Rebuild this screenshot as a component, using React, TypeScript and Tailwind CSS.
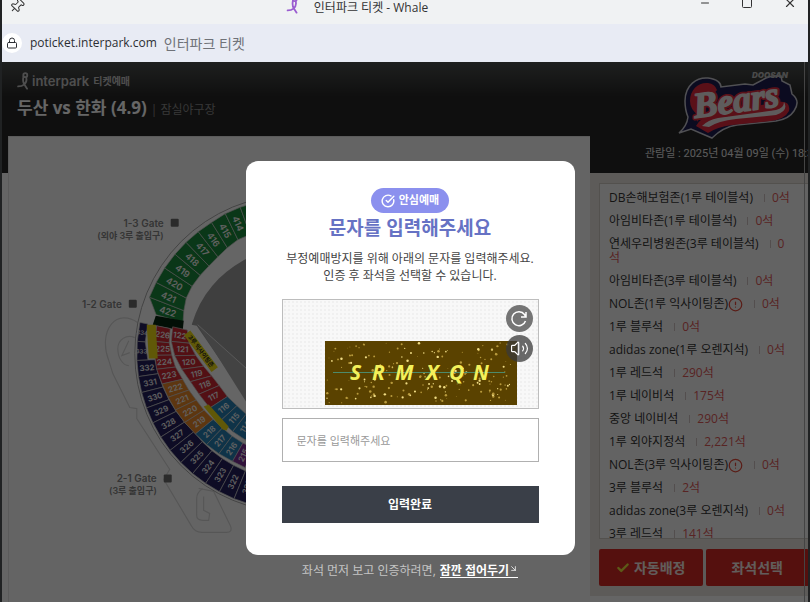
import { useState } from "react";
import { ArrowDownRight, Check, CircleAlert, CircleCheckBig, Lock, Minus, Pin, Square, Volume2, X } from "lucide-react";

type Zone = { name: string; seats: string; notice?: boolean };

const ZONES: Zone[] = [
  { name: "DB손해보험존(1루 테이블석)", seats: "0석" },
  { name: "아임비타존(1루 테이블석)", seats: "0석" },
  { name: "연세우리병원존(3루 테이블석)", seats: "0석" },
  { name: "아임비타존(3루 테이블석)", seats: "0석" },
  { name: "NOL존(1루 익사이팅존)", seats: "0석", notice: true },
  { name: "1루 블루석", seats: "0석" },
  { name: "adidas zone(1루 오렌지석)", seats: "0석" },
  { name: "1루 레드석", seats: "290석" },
  { name: "1루 네이비석", seats: "175석" },
  { name: "중앙 네이비석", seats: "290석" },
  { name: "1루 외야지정석", seats: "2,221석" },
  { name: "NOL존(3루 익사이팅존)", seats: "0석", notice: true },
  { name: "3루 블루석", seats: "2석" },
  { name: "adidas zone(3루 오렌지석)", seats: "0석" },
  { name: "3루 레드석", seats: "141석" },
];

// Centre of every stand: angles are degrees above the line going left from here
const CX = 293;
const CY = 353;

// [angle, outer radius, inner radius]
type Edge = [number, number, number];
type Block = { label: string; color: string };

const GREEN = "#1b8a3c";
const NAVY = "#25205c";
const RED = "#cf2834";
const ORANGE = "#e8872a";
const BLUE = "#2680b4";
const PURPLE = "#7b2d94";

const blocks = (color: string, ...labels: string[]): Block[] => labels.map((label) => ({ label, color }));

const OUTFIELD = blocks(GREEN, "422", "421", "420", "419", "418", "417", "416", "415", "414", "413");
const OUTFIELD_EDGES: Edge[] = [
  [15.8, 143, 115], [21.4, 155, 118], [27.4, 155, 121], [33.6, 155, 122], [40, 155, 122], [46, 155, 122],
  [52, 155, 123], [58, 155, 125], [64, 156, 127], [70, 156, 127], [76, 156, 127],
];

const UPPER_CORNER = blocks(NAVY, "334", "333");
const UPPER_CORNER_EDGES: Edge[] = [[11.5, 157, 149], [4.5, 157, 149], [-2.5, 157, 146]];

const UPPER = blocks(NAVY, "332", "331", "330", "329", "328", "327", "326", "325", "324", "323", "322", "321", "320");
const UPPER_EDGES: Edge[] = UPPER.concat(UPPER[0]).map((_, i) => [
  -2.5 - i * 5.93,
  157,
  Math.max(127, 139 - i * 2),
]);

const MIDDLE = [
  ...blocks(RED, "226", "225", "224", "223"),
  ...blocks(ORANGE, "222", "221", "220", "219"),
  ...blocks(BLUE, "218", "217", "216"),
  ...blocks(PURPLE, "215"),
];
const MIDDLE_EDGES: Edge[] = [
  [11.5, 140, 126], [5, 139, 125], [-0.7, 139, 122], [-6.5, 138, 119], [-13, 135, 114], [-19.2, 133, 111],
  [-25.5, 131, 108], [-32.3, 129, 106], [-39.3, 127, 104], [-46.3, 126, 103], [-53.3, 125, 103], [-60.5, 124, 103],
  [-67, 124, 103],
];

const LOWER = [
  ...blocks(RED, "122", "121", "120", "119", "118", "117"),
  ...blocks(BLUE, "116", "115", "114"),
  ...blocks(PURPLE, "113"),
];
const LOWER_EDGES: Edge[] = [
  [12.5, 124, 109], [5.7, 123, 105], [-1, 119, 98], [-8, 113, 91], [-15.2, 107, 85], [-23.2, 103, 81],
  [-33, 100, 79], [-42.6, 99, 77], [-52, 99, 77], [-61, 99, 77], [-70, 99, 77],
];

function point(angle: number, radius: number) {
  const rad = (angle * Math.PI) / 180;
  return [CX - radius * Math.cos(rad), CY - radius * Math.sin(rad)];
}

function Stand({ items, edges, size = 8 }: { items: Block[]; edges: Edge[]; size?: number }) {
  return (
    <g>
      {items.map((item, i) => {
        const [a, ao, ai] = edges[i];
        const [b, bo, bi] = edges[i + 1];
        const [mx, my] = point((a + b) / 2, (ao + ai + bo + bi) / 4);
        const shape = [point(a, ao), point(b, bo), point(b, bi), point(a, ai)];
        return (
          <g key={item.label}>
            <polygon points={shape.map((p) => p.join(",")).join(" ")} fill={item.color} stroke="#c8c8c8" strokeWidth="0.7" />
            <text
              x={mx}
              y={my}
              transform={`rotate(${(a + b) / 2} ${mx} ${my})`}
              textAnchor="middle"
              dominantBaseline="central"
              fontSize={size}
              fontWeight="600"
              fill="#f4f4f4"
            >
              {item.label}
            </text>
          </g>
        );
      })}
    </g>
  );
}

function Gate({ x, y, name, sub }: { x: number; y: number; name: string; sub?: string }) {
  return (
    <g fill="#858585" textAnchor="end">
      <text x={x} y={y} fontSize="10" fontWeight="600">{name}</text>
      {sub && <text x={x} y={y + 12} fontSize="9" fontWeight="600">{sub}</text>}
      <rect x={x + 7} y={y - 8} width="8" height="8" rx="1" fill="#6c6c6c" />
    </g>
  );
}

function SeatMap() {
  return (
    <svg
      viewBox="8 136 582 466"
      preserveAspectRatio="xMinYMin slice"
      className="block w-full font-['Inter','Noto_Sans_CJK_KR',sans-serif]"
      role="img"
      aria-label="잠실야구장 좌석도"
    >
      <g fill="none" stroke="#d8d8d8" strokeWidth="1.2">
        <path d="M137 322c-10-7-20-6-26 1-8 9-8 25-3 37l4 13 17 34 7 1 0 10 33 51-6 10 28 47q3 6 10 6h25q6 0 4-6l-17-35-15-3" />
        <path d="M134 337c-8-4-17 2-17 11 0 9 5 17 11 17M128 340l-7 15 8-3" />
        <path d="M202 488q-6 4-6 10v17q0 5 6 5h6l1-7-6-3v-14" />
      </g>
      <circle cx={CX} cy={CY} r="159" fill="#fdfdfd" stroke="#a9a9a9" strokeWidth="1" />
      <circle cx={CX} cy={CY} r="106" fill="#9d9d9d" />
      <path d="M180 322L196 325L246 398V452L180 400Z" fill="#fdfdfd" />
      <path d="M197 324L246 368V402Z" fill="#a8a8a8" />
      <path d="M197 324L246 368" stroke="#dcdcdc" fill="none" />
      <Stand items={OUTFIELD} edges={OUTFIELD_EDGES} size={9} />
      <path d="M155 315L183 320L182 330L152 324Z" fill="#07260f" />
      <Stand items={UPPER_CORNER} edges={UPPER_CORNER_EDGES} size={6} />
      <Stand items={UPPER} edges={UPPER_EDGES} size={8} />
      <Stand items={MIDDLE} edges={MIDDLE_EDGES} size={8} />
      <Stand items={LOWER} edges={LOWER_EDGES} size={8} />
      <path d="M146 324h9l2 34h-9z" fill="#f0dc14" />
      <path d="M203 406l5-2 20 22-2 4-4-1z" fill="#f0dc14" />
      <g transform="rotate(53 187 333)">
        <rect x="186" y="329" width="46" height="8" fill="#f0dc14" />
        <text x="209" y="335" fontSize="6" fontWeight="700" textAnchor="middle" fill="#222">3루 익사이팅존</text>
      </g>
      <Gate x={163} y={226} name="1-3 Gate" sub="(외야 3루 출입구)" />
      <Gate x={121} y={307} name="1-2 Gate" />
      <Gate x={156} y={482} name="2-1 Gate" sub="(3루 출입구)" />
    </svg>
  );
}

function Mark({ className }: { className?: string }) {
  return (
    <svg viewBox="0 0 14 20" className={className} fill="none" stroke="currentColor" strokeWidth="2" strokeLinecap="round" aria-hidden>
      <circle cx="9" cy="3.500" r="2.200" />
      <path d="M7 5c-1 4-1 6 1 9l3 4.500M10 6c1 4 0 6-2.500 8-2 1.800-3.500 2-6.500 2" />
    </svg>
  );
}

function TeamLogo() {
  const word = {
    x: 17,
    y: 46,
    transform: "rotate(-8 17 46)",
    fontFamily: "'Liberation Serif', serif",
    fontSize: 36,
    fontWeight: 700,
    fontStyle: "italic",
    strokeLinejoin: "round" as const,
  };
  return (
    <svg viewBox="0 0 118 68" className="h-[68px] w-[118px] overflow-visible" role="img" aria-label="DOOSAN Bears">
      <path
        d="M7 29C7 13 19 5 30 6c9 1 13 5 13 9l24-3 8 1 13-7 6-2h9l1 5 8 4 2 9q9 7 2 17-5 8-18 10l-39 4q-14 2-25 13L13 57l-12 4q8-7 9-16-3-7-3-16z"
        fill="#1c1c50"
        stroke="#c8c8d0"
        strokeWidth="1.500"
      />
      <path d="M12 29C12 17 21 10 30 11q7 1 9 7l-18 22-1 10q-2-3 0-7-8-6-8-14z" fill="#e02a3c" />
      <path d="M18 54q4-8 16-12l66-12q13-2 11 9-4 8-18 10l-39 4q-15 2-24 8z" fill="#e02a3c" />
      <path d="M24 54q6-6 16-8l58-8q8-2 8-8 5 9-8 13l-40 4q-18 2-27 8z" fill="#ece6e6" />
      <text {...word} fill="#e02a3c" stroke="#e02a3c" strokeWidth="5" aria-hidden>Bears</text>
      <text {...word} fill="#ece6e6" stroke="#ece6e6" strokeWidth="1.500">Bears</text>
      <text x="74" y="6" fontFamily="Inter, sans-serif" fontSize="8" fontWeight="900" fontStyle="italic" fill="#b8b8b8">
        DOOSAN
      </text>
    </svg>
  );
}

// Fixed seed, so the specks stay put between renders
function specks(count: number) {
  let seed = 7;
  const next = () => (seed = (seed * 16807) % 2147483647) / 2147483647;
  return Array.from({ length: count }, () => ({ x: next() * 188 + 2, y: next() * 60 + 2, r: next() * 0.9 + 0.4 }));
}

const SPECKS = specks(190);
const LETTERS = [..."SRMXQN"];

function Captcha() {
  return (
    <svg viewBox="0 0 192 64" className="h-16 w-48" role="img" aria-label="자동입력 방지문자">
      <rect width="192" height="64" fill="#5a4200" />
      {SPECKS.map((s, i) => (
        <circle key={i} cx={s.x} cy={s.y} r={s.r} fill={i % 3 ? "#b89a3c" : "#f0dc84"} />
      ))}
      <path d="M8 31.500H180" stroke="#4c8a6c" />
      <g fontFamily="'Open Sans', sans-serif" fontSize="21" fontWeight="700" fontStyle="italic" fill="#f3f05a">
        {LETTERS.map((letter, i) => (
          <text key={letter} x={[25, 47, 70, 101, 124, 148][i]} y="39">{letter}</text>
        ))}
      </g>
    </svg>
  );
}

function SafeBookingDialog() {
  const [value, setValue] = useState("");

  return (
    <div className="absolute inset-0 flex flex-col items-center bg-black/60 pt-[99px]">
      <form
        role="dialog"
        aria-labelledby="safe-title"
        onSubmit={(e) => e.preventDefault()}
        className="flex w-[329px] flex-col items-center rounded-xl bg-white px-[36px] pt-[27px] pb-[32px]"
      >
        <span className="flex h-[25px] items-center gap-1 rounded-full bg-[#8b90ee] px-2.5 text-[11px] font-bold text-white">
          <CircleCheckBig size={14} strokeWidth={2.5} />
          안심예매
        </span>
        <h2 id="safe-title" className="mt-px text-[19px] leading-7 font-bold text-[#6672c4]">문자를 입력해주세요</h2>
        <p className="mt-2 text-center text-[12px] leading-[17px] whitespace-nowrap text-[#444]">
          부정예매방지를 위해 아래의 문자를 입력해주세요.
          <br />
          인증 후 좌석을 선택할 수 있습니다.
        </p>
        <div className="relative mt-[15px] flex h-[110px] w-full items-end border border-[#bdbdbd] bg-[#f8f8f8] bg-[radial-gradient(#f0f0f0_1px,transparent_1px)] bg-[size:4px_4px] pb-[3px] pl-[42px]">
          <Captcha />
          <div className="absolute top-[5px] right-[5px] flex flex-col gap-[3px]">
            <button type="button" aria-label="새로고침" className="flex size-[27px] items-center justify-center rounded-full bg-[#4a4a4a]/75 text-white">
              <svg viewBox="0 0 18 18" className="size-[18px]" fill="none" stroke="currentColor" strokeWidth="1.500" aria-hidden>
                <path d="M15.500 11A7 7 0 1 1 14.500 4.500L16 7M16 2V7H11" />
              </svg>
            </button>
            <button type="button" aria-label="음성듣기" className="flex size-[27px] items-center justify-center rounded-full bg-[#3a3a3a]/75 text-white">
              <Volume2 size={19} strokeWidth={1.5} />
            </button>
          </div>
        </div>
        <input
          aria-label="문자 입력"
          placeholder="문자를 입력해주세요"
          value={value}
          onChange={(e) => setValue(e.target.value)}
          className="mt-[9px] h-[44px] w-full border border-[#b0b0b0] px-[14px] text-[11px] text-[#333] placeholder:text-[#999]"
        />
        <button type="submit" className="mt-[24px] h-[37px] w-full bg-[#3a3f48] text-[12px] font-bold text-white">
          입력완료
        </button>
      </form>
      <p className="mt-[7px] flex text-[12px] leading-[18px] text-[#c4c4c4]">
        좌석 먼저 보고 인증하려면,
        <a href="#fold" className="ml-1 flex h-4 border-b border-white font-bold text-white">
          잠깐 접어두기
          <ArrowDownRight size={9} className="mt-[2px]" />
        </a>
      </p>
    </div>
  );
}

function ZonePanel() {
  return (
    <aside className="flex w-[228px] shrink-0 flex-col">
      <div className="flex h-[111px] flex-col items-start pt-[10px]">
        <div className="ml-[88px]">
          <TeamLogo />
        </div>
        <p className="mt-[6px] ml-[55px] font-['Roboto','Noto_Sans_CJK_KR',sans-serif] text-[11px] leading-4 whitespace-nowrap text-[#e4e4e4]">
          관람일 : 2025년 04월 09일 (수) 18:30
        </p>
      </div>
      <div className="bg-[#e8e4de] px-[9px] py-[10px]">
        <ul className="h-[356px] overflow-hidden border border-[#cfcac4] bg-[#f8f8f8] pt-[7px] pr-[14px] pl-[9px] text-[12px] leading-[14px] text-[#333]">
          {ZONES.map((zone) => (
            <li key={zone.name} className="mb-[9px]">
              {zone.name}
              {zone.notice && <CircleAlert size={15} className="-my-1 inline align-middle text-[#e04a3a]" />}
              <span className="mr-[7px] ml-[11px] inline-block h-2 w-px bg-[#cfc4c4]" />
              <span className="text-[#dc5a5a]">{zone.seats}</span>
            </li>
          ))}
        </ul>
        <div className="mt-[10px] flex gap-[3px] text-[14px] font-bold text-[#f4e8e4]">
          <button className="flex h-[37px] flex-1 items-center justify-center gap-1 rounded-xs bg-[#d42a24]">
            <Check size={14} strokeWidth={4} className="text-[#e8e03c]" />
            자동배정
          </button>
          <button className="h-[37px] flex-1 rounded-xs bg-[#d42a24]">좌석선택</button>
        </div>
      </div>
    </aside>
  );
}

export default function App() {
  return (
    <div className="flex min-h-screen flex-col overflow-hidden bg-[#202223] px-[2px] font-['Open_Sans','Noto_Sans_CJK_KR',sans-serif]">
      <header className="flex h-6 items-start overflow-hidden bg-[#f0f2f3] pr-[11px] pl-[7px] text-[#333]">
        <Pin size={16} strokeWidth={1.5} className="-mt-[2px] rotate-45" />
        <h1 className="flex flex-1 justify-center gap-[14px] pr-[10px] text-[12px] leading-[15px]">
          <Mark className="-mt-1 h-[18px] w-[14px] text-[#9a5cd0]" />
          인터파크 티켓 - Whale
        </h1>
        <div className="flex gap-[30px]">
          <button aria-label="최소화"><Minus size={12} strokeWidth={2} className="-mt-1" /></button>
          <button aria-label="최대화"><Square size={12} strokeWidth={2} className="-mt-1" /></button>
          <button aria-label="닫기"><X size={14} strokeWidth={2} className="-mt-1" /></button>
        </div>
      </header>

      <div className="flex h-[38px] items-center overflow-hidden bg-[#e8ebf4] text-[#2c2e33]">
        <span className="flex size-5 items-center justify-center rounded-full bg-white">
          <Lock size={12} strokeWidth={2} />
        </span>
        <span className="ml-2 text-[12px]">poticket.interpark.com</span>
        <span className="ml-[7px] text-[14px] text-[#6f7278]">인터파크 티켓</span>
      </div>

      <div className="relative flex flex-1 overflow-hidden bg-[#fdfdfd]">
        {/* The booking page is a little wider than the popup window */}
        <div className="relative -mr-[10px] flex flex-1 bg-[linear-gradient(#4c504e,#262626_35px)] bg-[size:100%_111px] bg-no-repeat">
          <main className="flex min-w-0 flex-1 flex-col pl-[6px]">
            <div className="flex h-[74px] flex-col gap-1 pt-[10px] pl-[9px]">
              <div className="flex items-center text-[#c4c4c4]">
                <Mark className="h-[18px] w-[13px]" />
                <span className="ml-[2px] font-['Inter',sans-serif] text-[13px] leading-[18px] font-semibold">interpark</span>
                <span className="ml-1 text-[10px] leading-[18px] font-bold">티켓예매</span>
              </div>
              <div className="flex items-baseline">
                <h2 className="text-[17px] leading-7 font-bold text-white">두산 vs 한화 (4.9)</h2>
                <span className="ml-1 text-[12px] text-[#8a8a8a]">| 잠실야구장</span>
              </div>
            </div>
            <div className="flex-1 border-t border-l border-[#e4e4e4] bg-[#fbfbfb]">
              <SeatMap />
            </div>
          </main>
          <ZonePanel />
          <SafeBookingDialog />
        </div>
        <div className="absolute inset-y-0 right-0 w-1 border-l border-[#444]" />
      </div>
    </div>
  );
}
